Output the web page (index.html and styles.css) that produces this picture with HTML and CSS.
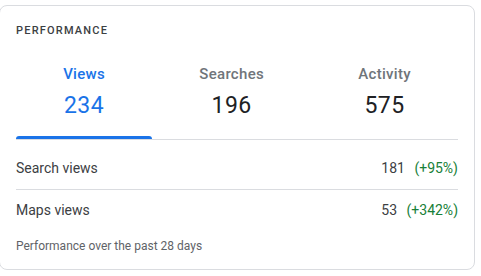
FILE: index.html
```html
<!DOCTYPE html>
<html lang="en">

<head>
    <meta charset="UTF-8">
    <meta name="viewport" content="width=device-width, initial-scale=1.0">
    <title>Performance</title>
    <link rel="stylesheet" href="styles.css">
</head>

<body>
    <div class="card">
        <h2 class="title">PERFORMANCE</h2>

        <div class="tabs">
            <div class="tab active">
                <span class="tab-label">Views</span>
                <span class="tab-value">234</span>
            </div>
            <div class="tab">
                <span class="tab-label">Searches</span>
                <span class="tab-value">196</span>
            </div>
            <div class="tab">
                <span class="tab-label">Activity</span>
                <span class="tab-value">575</span>
            </div>
        </div>

        <div class="rows">
            <div class="row">
                <span class="row-name">Search views</span>
                <span class="row-value">181 <span class="change">(+95%)</span></span>
            </div>
            <div class="row">
                <span class="row-name">Maps views</span>
                <span class="row-value">53 <span class="change">(+342%)</span></span>
            </div>
        </div>

        <p class="footer">Performance over the past 28 days</p>
    </div>
</body>

</html>
```

FILE: styles.css
```css
body {
    margin: 0;
    padding-top: 5px;
    font-family: Roboto, "Liberation Sans", Arial, sans-serif;
    background-color: #fff;
}

.card {
    width: 442px;
    margin-left: -1px;
    padding: 17px 16px 15px 16px;
    border: 1px solid #dadce0;
    border-radius: 8px;
    background-color: #fff;
}

.title {
    margin: 0;
    font-size: 11px;
    line-height: 16px;
    font-weight: 500;
    letter-spacing: 1.2px;
    color: #3c4043;
}

.tabs {
    display: flex;
    margin-top: 25px;
    border-bottom: 1px solid #dadce0;
}

.tab {
    flex: 1 1 auto;
    display: flex;
    flex-direction: column;
    align-items: center;
}

.tab::after {
    content: "";
    align-self: stretch;
    height: 3px;
    margin-top: 16px;
    border-radius: 3px 3px 0 0;
    background-color: transparent;
}

.tab.active::after {
    background-color: #1a73e8;
}

.tab-label {
    font-size: 15px;
    line-height: 20px;
    font-weight: 500;
    letter-spacing: 0.3px;
    color: #70757a;
}

.tab-value {
    margin-top: 8px;
    font-size: 23px;
    line-height: 28px;
    letter-spacing: 0.5px;
    color: #202124;
}

.tab.active .tab-label,
.tab.active .tab-value {
    color: #1a73e8;
}

.rows {
    margin-top: 8px;
}

.row {
    display: flex;
    justify-content: space-between;
    padding: 10px 0 11px 0;
    font-size: 14px;
    line-height: 20px;
    color: #3c4043;
}

.row + .row {
    border-top: 1px solid #dadce0;
}

.change {
    margin-left: 6px;
    color: #188038;
}

.footer {
    margin: 7px 0 0 0;
    font-size: 12px;
    line-height: 16px;
    color: #5f6368;
}
```
